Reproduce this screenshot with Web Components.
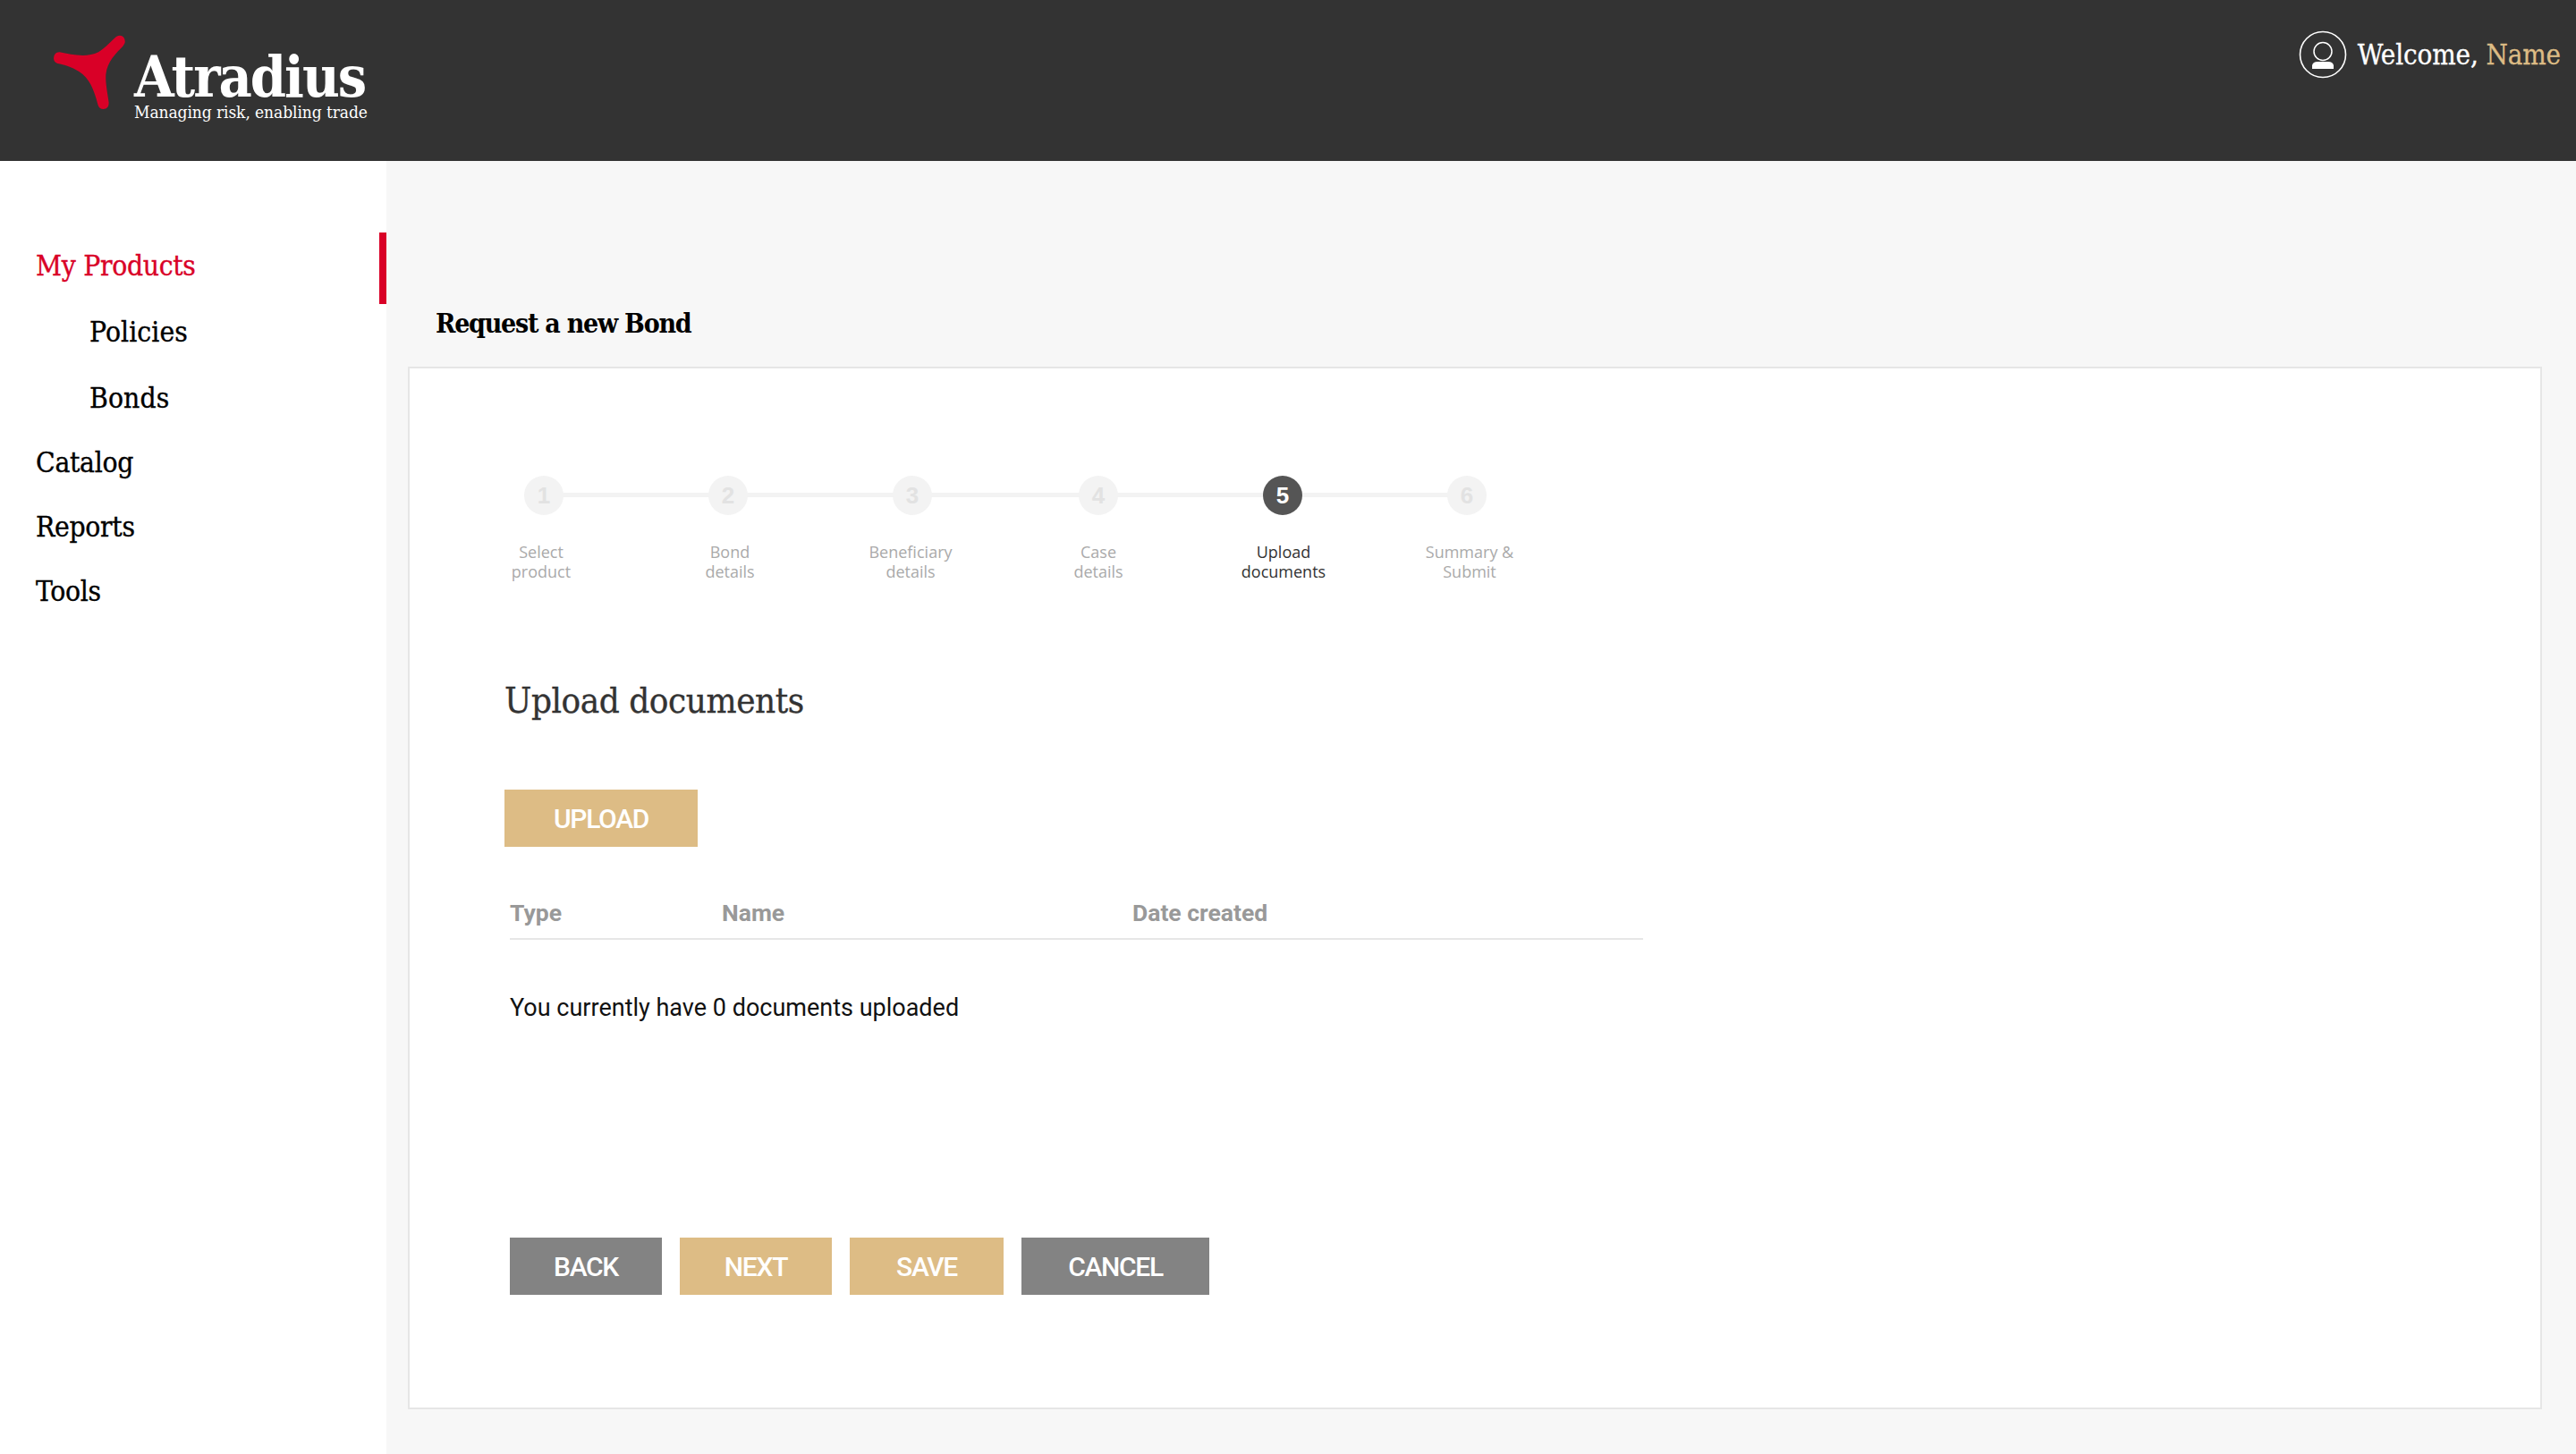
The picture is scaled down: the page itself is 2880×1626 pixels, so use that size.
<!DOCTYPE html>
<html lang="en"><head><meta charset="utf-8"><title>Request a new Bond</title>
<style>
html,body{margin:0;height:1626px;overflow:hidden;background:#f7f7f7}
body{display:flex;flex-direction:column;font-family:"DejaVu Serif Condensed","DejaVu Serif",serif}
</style></head><body>
<app-header></app-header>
<app-shell>
  <side-nav slot="nav">
    <nav-item active>My Products</nav-item>
    <nav-item sub h="74">Policies</nav-item>
    <nav-item sub h="74">Bonds</nav-item>
    <nav-item h="72">Catalog</nav-item>
    <nav-item h="72">Reports</nav-item>
    <nav-item h="72">Tools</nav-item>
  </side-nav>
  <content-pane title-text="Request a new Bond">
    <step-bar>
      <step-item n="1" dx="-3">Select<br>product</step-item>
      <step-item n="2" dx="2">Bond<br>details</step-item>
      <step-item n="3" dx="-2">Beneficiary<br>details</step-item>
      <step-item n="4" class="s4">Case<br>details</step-item>
      <step-item n="5" dx="1" active>Upload<br>documents</step-item>
      <step-item n="6" dx="3" last>Summary &amp;<br>Submit</step-item>
    </step-bar>
    <upload-panel></upload-panel>
    <action-row>
      <act-btn w="170" kind="gray">BACK</act-btn>
      <act-btn w="170">NEXT</act-btn>
      <act-btn w="172">SAVE</act-btn>
      <act-btn w="210" kind="gray">CANCEL</act-btn>
    </action-row>
  </content-pane>
</app-shell>
<script>
function def(name, html, init){
  customElements.define(name, class extends HTMLElement{
    constructor(){super();this.attachShadow({mode:'open'}).innerHTML=html;}
    connectedCallback(){init&&init(this);}
  });
}
const SERIF='"DejaVu Serif Condensed","DejaVu Serif",serif';
const SANS='Roboto,"Open Sans",sans-serif';
def('app-header',`<style>
:host{display:flex;justify-content:space-between;height:180px;background:#333;flex:none}
</style><brand-logo></brand-logo><user-badge></user-badge>`);
def('brand-logo',`<style>
:host{display:flex;align-items:flex-start;padding:38px 0 0 60px;color:#fff;font-family:${SERIF}}
svg{width:82px;height:86px;margin-right:8px;flex:none}
.t{display:flex;flex-direction:column;padding-top:20px}
.a{font-size:64px;font-weight:700;line-height:55px;letter-spacing:-2px}
.b{font-size:19px;line-height:24px;letter-spacing:-.08px;white-space:nowrap}
</style>
<svg viewBox="0 0 246 258" aria-hidden="true"><path fill="#d90027" transform="translate(-180 -114)" d="M200 175C240 183 290 195 330 175C355 160 375 135 390 123Q405 115 415 125Q425 140 412 155C390 178 360 205 355 250C353 280 362 320 365 345Q365 365 347 366Q332 366 328 350C315 300 300 262 265 240C240 224 215 217 193 213Q180 208 180 195Q182 174 200 175Z"/></svg>
<div class="t"><span class="a">Atradius</span><span class="b">Managing risk, enabling trade</span></div>`);
def('user-badge',`<style>
:host{display:flex;align-items:center;gap:12px;height:52px;padding:35px 17px 0 0;color:#fff;font-family:${SERIF};font-size:31px;letter-spacing:-.1px;-webkit-text-stroke:.3px currentColor}
svg{width:54px;height:54px;flex:none}
b{font-weight:400;color:#ddbc85}
</style>
<svg viewBox="0 0 54 54" aria-hidden="true"><circle cx="27" cy="27" r="25.5" fill="none" stroke="#fff" stroke-width="1.6"/><circle cx="27" cy="23.5" r="10" fill="none" stroke="#fff" stroke-width="1.5"/><path fill="#fff" d="M15 43V39Q16 35 21 35H33Q38 35 39 39V43Z"/></svg>
<span>Welcome, <b>Name</b></span>`);
def('app-shell',`<style>
:host{display:flex;flex:1;min-height:0}
::slotted(side-nav){flex:none}
</style><slot name="nav"></slot><slot></slot>`);
def('side-nav',`<style>
:host{display:flex;flex-direction:column;width:432px;padding-top:80px;background:#fff;box-sizing:border-box}
</style><slot></slot>`);
def('nav-item',`<style>
:host{display:flex;align-items:flex-end;box-sizing:border-box;padding:0 0 23px 40px;height:80px;font-size:31.5px;line-height:40px;color:#000;letter-spacing:-.3px;-webkit-text-stroke:.35px currentColor}
:host([sub]){padding-left:100px;letter-spacing:.1px}
:host([active]){color:#d90027;border-right:8px solid #d90027}
</style><slot></slot>`,el=>{const h=el.getAttribute('h');if(h)el.style.height=h+'px';});
def('content-pane',`<style>
:host{display:flex;flex-direction:column;flex:1;min-width:0;padding:0 38px 50px 24px;box-sizing:border-box}
h1{margin:0;height:230px;box-sizing:border-box;padding:162px 0 0 31px;font-size:30px;line-height:40px;font-weight:700;color:#000;letter-spacing:-1.25px}
.card{flex:1;box-sizing:border-box;background:#fff;border:2px solid #e6e6e6;padding:120px 0 0 106px;display:flex;flex-direction:column}
</style><h1></h1><div class="card"><slot></slot></div>`,el=>{el.shadowRoot.querySelector('h1').textContent=el.getAttribute('title-text');});
def('step-bar',`<style>
:host{display:flex;margin-left:-59px;width:1238px}
</style><slot></slot>`);
def('step-item',`<style>
:host{display:flex;flex-direction:column;align-items:center;flex:none;width:206px;position:relative;font-family:"Open Sans",sans-serif;font-size:18px;line-height:22px;color:#aaa;text-align:center}
:host(.s4){margin-left:2px}
:host::after{content:"";position:absolute;left:50%;width:100%;top:19px;height:5px;background:#f3f3f3}
:host([last])::after{display:none}
.c{width:44px;height:44px;border-radius:50%;background:#f3f3f3;color:#e2e2e2;font:700 26px/44px "Liberation Sans",sans-serif;position:relative;z-index:1}
.l{margin-top:30px}
:host([active]){color:#333}
:host([active]) .c{background:#555;color:#fff}
</style><div class="c"></div><div class="l"><slot></slot></div>`,el=>{
  el.shadowRoot.querySelector('.c').textContent=el.getAttribute('n');
  const dx=el.getAttribute('dx');if(dx)el.shadowRoot.querySelector('.l').style.transform=`translateX(${dx}px)`;
});
def('upload-panel',`<style>
:host{display:block;margin-top:108px;font-family:${SANS}}
h2{margin:0;font:400 40px/50px ${SERIF};color:#333;letter-spacing:-.45px;-webkit-text-stroke:.35px currentColor}
act-btn{margin-top:75px}
.th{display:grid;grid-template-columns:237px 459px 1fr;margin:58px 0 0 6px;width:1267px;box-sizing:border-box;height:46px;border-bottom:2px solid #e6e6e6;font-size:26.5px;line-height:32px;font-weight:700;color:#999}
p{margin:59px 0 0 6px;font-size:27px;line-height:34px;color:#111}
</style><h2>Upload documents</h2><act-btn w="216">UPLOAD</act-btn>
<div class="th"><span>Type</span><span>Name</span><span>Date created</span></div>
<p>You currently have 0 documents uploaded</p>`);
def('action-row',`<style>
:host{display:flex;gap:20px;margin:240px 0 0 6px}
</style><slot></slot>`);
def('act-btn',`<style>
:host{display:flex;align-items:center;justify-content:center;height:64px;padding-top:2px;background:#ddbc85;color:#fff;font:500 30px/1 ${SANS};letter-spacing:-1.3px;box-sizing:border-box}
:host([kind=gray]){background:#838383}
</style><slot></slot>`,el=>{el.style.width=el.getAttribute('w')+'px';});
</script>
</body></html>
